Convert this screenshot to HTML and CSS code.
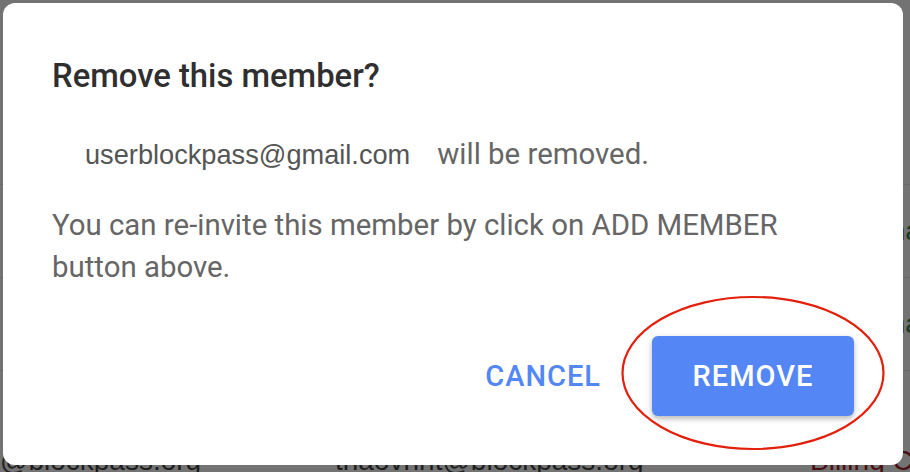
FILE: index.html
```html
<!DOCTYPE html>
<html>
<head>
<meta charset="utf-8">
<link rel="stylesheet" href="styles.css">
</head>
<body>
<div class="page">
  <div class="row row-a"><span class="c1">admin@blockpass.org</span><span class="c2">owner@blockpass.org</span><span class="c3 ok">Admina</span></div>
  <div class="row row-b"><span class="c1">dev@blockpass.org</span><span class="c2">team@blockpass.org</span><span class="c3 ok">Admina</span></div>
  <div class="row row-c"><span class="c1">@blockpass.org</span><span class="c2">thaovhnt@blockpass.org</span><span class="c3 warn">Billing C</span></div>
</div>

<div class="dialog">
  <h2 class="title">Remove this member?</h2>
  <div class="email-line">
    <span class="email">userblockpass@gmail.com</span>
    <span class="removed">will be removed.</span>
  </div>
  <p class="body">You can re-invite this member by click on ADD MEMBER button above.</p>
  <div class="actions">
    <button class="btn-text">CANCEL</button>
    <button class="btn-primary">REMOVE</button>
  </div>
</div>

<svg class="annotation" width="266" height="156" viewBox="0 0 266 156">
  <ellipse cx="133" cy="78" rx="130.5" ry="76" fill="none" stroke="#e3200c" stroke-width="2.2"/>
</svg>
</body>
</html>
```

FILE: styles.css
```css
html, body {
  margin: 0;
  padding: 0;
}
body {
  width: 910px;
  height: 472px;
  overflow: hidden;
  position: relative;
  background: #737373;
  font-family: Roboto, "Liberation Sans", sans-serif;
}
.page {
  width: 910px;
  overflow: hidden;
  display: flex;
  flex-direction: column;
  padding-top: 184px;
}
.row {
  display: flex;
  align-items: center;
  border-top: 1px solid #686868;
  font-family: "Liberation Sans", Arial, sans-serif;
  font-size: 28px;
  color: #1e1e1e;
  white-space: nowrap;
  overflow: hidden;
}
.row-a { height: 92px; }
.row-b { height: 92px; }
.row-c { height: 116px; padding-top: 64px; box-sizing: border-box; }
.c1 { width: 192px; flex: none; text-align: right; }
.row-a .c1, .row-b .c1 { visibility: hidden; }
.c2 { width: 475px; flex: none; margin-left: 143px; }
.c3 { flex: none; }
.row-a .c3, .row-b .c3 { margin-left: 16px; }
.ok { color: #1d3b20; }
.warn { color: #4a0f0f; }

.dialog {
  position: absolute;
  left: 3px;
  top: 3px;
  width: 900px;
  height: 462px;
  box-sizing: border-box;
  background: #ffffff;
  border-radius: 12px;
  padding: 57px 49px 0 49px;
  display: flex;
  flex-direction: column;
}
.title {
  margin: 0;
  font-family: Roboto, sans-serif;
  font-weight: 500;
  font-size: 32.8px;
  line-height: 32px;
  color: #2f2f2f;
}
.email-line {
  margin-top: 44px;
  display: flex;
  align-items: baseline;
  height: 36px;
  line-height: 36px;
}
.email {
  margin-left: 33px;
  font-family: "Liberation Sans", Arial, sans-serif;
  font-size: 27.2px;
  color: #555555;
}
.removed {
  margin-left: 27px;
  font-family: Roboto, sans-serif;
  font-size: 29.4px;
  color: #666666;
}
.body {
  margin: 32px 0 0 0;
  font-family: Roboto, sans-serif;
  font-size: 29.4px;
  line-height: 42px;
  color: #666666;
}
.actions {
  margin-top: 48px;
  display: flex;
  justify-content: flex-end;
  align-items: center;
  gap: 51px;
}
button {
  font-family: Roboto, sans-serif;
  font-weight: 500;
  font-size: 29px;
  letter-spacing: 1px;
  border: none;
  cursor: pointer;
}
.btn-text {
  background: none;
  padding: 0;
  color: #5287f5;
}
.btn-primary {
  width: 202px;
  height: 80px;
  padding: 0;
  border-radius: 6px;
  background: #5487f5;
  color: #ffffff;
  box-shadow: 0 3px 5px rgba(0, 0, 0, 0.22), 0 1px 10px rgba(0, 0, 0, 0.08);
}
.annotation {
  position: absolute;
  left: 620px;
  top: 295px;
}
```
